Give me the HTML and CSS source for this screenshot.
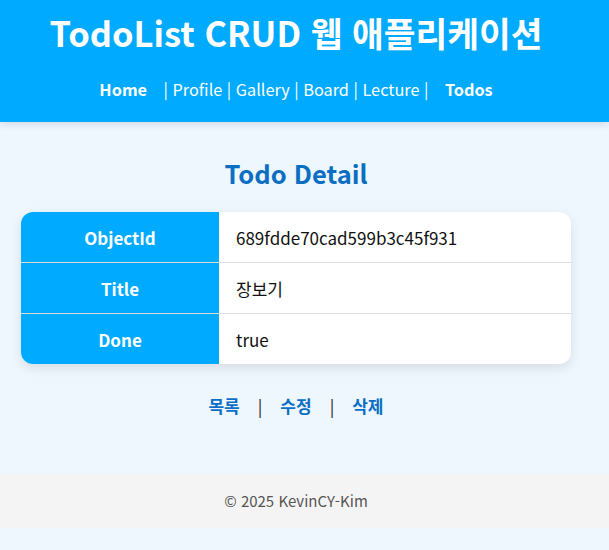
FILE: index.html
```html
<!DOCTYPE html>
<html lang="ko">
<head>
<meta charset="utf-8">
<title>Todo Detail</title>
<link rel="stylesheet" href="styles.css">
</head>
<body>
<header class="site-header">
  <h1 class="site-title">TodoList CRUD 웹 애플리케이션</h1>
  <nav class="site-nav">
    <a class="nav-link nav-strong" href="#">Home</a>
    <span class="nav-plain">| <a href="#">Profile</a> | <a href="#">Gallery</a> | <a href="#">Board</a> | <a href="#">Lecture</a> |</span>
    <a class="nav-link nav-strong" href="#">Todos</a>
  </nav>
</header>
<main class="content">
  <h2 class="page-title">Todo Detail</h2>
  <table class="detail">
    <tr><th>ObjectId</th><td>689fdde70cad599b3c45f931</td></tr>
    <tr><th>Title</th><td>장보기</td></tr>
    <tr><th>Done</th><td>true</td></tr>
  </table>
  <div class="actions">
    <a href="#">목록</a><span class="sep">|</span><a href="#">수정</a><span class="sep">|</span><a href="#">삭제</a>
  </div>
</main>
<footer class="site-footer">© 2025 KevinCY-Kim</footer>
</body>
</html>
```

FILE: styles.css
```css
* { box-sizing: border-box; }
html, body {
  margin: 0;
  padding: 0;
  background: #eef6fe;
  font-family: "Noto Sans CJK KR", "Noto Sans", sans-serif;
}
.site-header {
  background: #00aaff;
  padding: 0 17px 0 0;
  box-shadow: 0 2px 8px rgba(0,0,0,0.12);
  text-align: center;
  height: 122px;
}
.site-title {
  margin: 0;
  padding-top: 8px;
  font-size: 34.5px;
  line-height: 48px;
  font-weight: 700;
  color: #fff;
}
.site-nav {
  margin-top: 21px;
  font-size: 16.3px;
  line-height: 24px;
  color: #fff;
}
.site-nav a { color: #fff; text-decoration: none; }
.nav-strong { font-weight: 700; margin: 0 12px; }
.nav-plain { font-weight: 400; }
.content {
  padding: 30px 17px 0 0;
  text-align: center;
}
.page-title {
  margin: 0;
  font-size: 25.5px;
  line-height: 42px;
  color: #0a6fc2;
  font-weight: 700;
}
.detail {
  width: 550px;
  margin: 18px auto 0;
  border-collapse: separate;
  border-spacing: 0;
  border-radius: 12px;
  overflow: hidden;
  background: #fff;
  box-shadow: 0 4px 12px rgba(0,0,0,0.1);
  font-size: 17px;
}
.detail th, .detail td {
  height: 51px;
  border-bottom: 1px solid #dcdcdc;
}
.detail tr:last-child th, .detail tr:last-child td { border-bottom: none; height: 50px; }
.detail th {
  width: 198px;
  background: #00aaff;
  color: #fff;
  font-weight: 700;
  text-align: center;
}
.detail td {
  text-align: left;
  padding-left: 17px;
  color: #111;
}
.actions {
  margin-top: 30px;
  font-size: 17px;
  line-height: 24px;
  font-weight: 700;
}
.actions a { color: #0b6fc6; text-decoration: none; }
.actions .sep { color: #222; margin: 0 18px; font-weight: 400; }
.site-footer {
  margin-top: 56px;
  background: #f4f4f4;
  height: 54px;
  line-height: 54px;
  padding-right: 17px;
  text-align: center;
  font-size: 15px;
  color: #555;
}
```
